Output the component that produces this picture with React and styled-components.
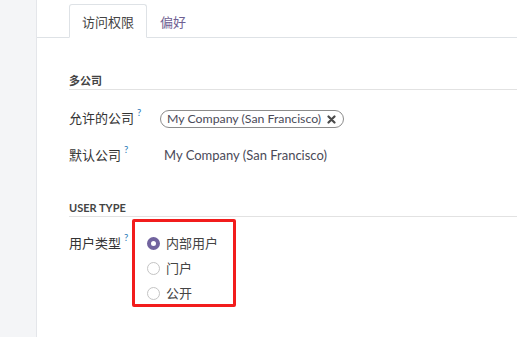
import styled, { createGlobalStyle } from 'styled-components'

const GlobalStyle = createGlobalStyle`
  html, body {
    margin: 0;
    padding: 0;
    background: #fff;
  }
  body {
    font-family: Lato, "Noto Sans CJK SC", sans-serif;
    font-size: 13px;
    color: #4c4c4c;
  }
`

const Page = styled.div`
  display: flex;
  width: 517px;
  height: 337px;
  overflow: hidden;
`

const Sidebar = styled.div`
  width: 36px;
  flex: none;
  background: #f4f5f7;
  border-right: 1px solid #e4e6ea;
`

const Sheet = styled.div`
  flex: 1;
  padding-top: 4px;
`

const TabBar = styled.div`
  display: flex;
  align-items: flex-end;
  padding-left: 32px;
  border-bottom: 1px solid #dee2e6;
  height: 33px;
`

const Tab = styled.div`
  height: 34px;
  box-sizing: border-box;
  padding: 0 12px;
  display: flex;
  align-items: center;
  font-size: 13px;
  margin-bottom: -1px;
  border: 1px solid ${p => (p.$active ? '#dee2e6' : 'transparent')};
  border-bottom-color: ${p => (p.$active ? '#fff' : 'transparent')};
  border-radius: 3px 3px 0 0;
  background: ${p => (p.$active ? '#fff' : 'transparent')};
  color: ${p => (p.$active ? '#444' : '#6f5f93')};
`

const Body = styled.div`
  padding-left: 32px;
`

const SectionTitle = styled.div`
  margin-top: ${p => p.$top}px;
  font-size: 11px;
  font-weight: 700;
  line-height: 16px;
  color: #444;
  border-bottom: 1px solid #e2e2e2;
`

const Row = styled.div`
  display: grid;
  grid-template-columns: 91px 1fr;
  align-items: start;
  margin-top: ${p => p.$top}px;
  line-height: 25px;
`

const Label = styled.div`
  color: #333;
  white-space: nowrap;
`

const Help = styled.sup`
  color: #2a7ab8;
  font-size: 9.5px;
  margin-left: 3px;
  vertical-align: 7px;
  line-height: 0;
`

const Tag = styled.span`
  display: inline-flex;
  align-items: center;
  gap: 6px;
  height: 18px;
  box-sizing: border-box;
  margin-top: 3px;
  padding: 0 7px 0 6px;
  border: 1px solid #8c8c8c;
  border-radius: 9px;
  color: #4a4a58;
  font-size: 12.3px;
  line-height: 16px;
  white-space: nowrap;
`

const Value = styled.div`
  padding-left: 4px;
  color: #4a4a58;
  white-space: nowrap;
`

const RadioList = styled.div`
  position: relative;
  margin-left: -13px;

  &::after {
    content: '';
    position: absolute;
    left: -15px;
    top: -12px;
    width: 104px;
    height: 88px;
    box-sizing: border-box;
    border: 3px solid #f21c1c;
    border-radius: 2px;
    pointer-events: none;
  }
`

const RadioRow = styled.div`
  display: flex;
  align-items: center;
  gap: 6px;
  height: 25px;
  color: #444;
`

const RadioDot = styled.span`
  width: 13px;
  height: 13px;
  box-sizing: border-box;
  border-radius: 50%;
  border: ${p => (p.$checked ? '4px solid #71639e' : '1px solid #c4c4c4')};
  background: #fff;
`

const Close = () => (
  <svg width="9" height="9" viewBox="0 0 9 9">
    <path d="M1.5 1.5 L7.5 7.5 M7.5 1.5 L1.5 7.5" stroke="#4a4a4a" strokeWidth="2.2" strokeLinecap="round" />
  </svg>
)

const userTypes = [
  { label: '内部用户', checked: true },
  { label: '门户', checked: false },
  { label: '公开', checked: false },
]

export default function App() {
  return (
    <>
      <GlobalStyle />
      <Page>
        <Sidebar />
        <Sheet>
          <TabBar>
            <Tab $active>访问权限</Tab>
            <Tab>偏好</Tab>
          </TabBar>
          <Body>
            <SectionTitle $top={35}>多公司</SectionTitle>
            <Row $top={16}>
              <Label>允许的公司<Help>?</Help></Label>
              <div>
                <Tag>My Company (San Francisco) <Close /></Tag>
              </div>
            </Row>
            <Row $top={12}>
              <Label>默认公司<Help>?</Help></Label>
              <Value>My Company (San Francisco)</Value>
            </Row>
            <SectionTitle $top={32}>USER TYPE</SectionTitle>
            <Row $top={14}>
              <Label>用户类型<Help>?</Help></Label>
              <RadioList>
                {userTypes.map(t => (
                  <RadioRow key={t.label}>
                    <RadioDot $checked={t.checked} />
                    {t.label}
                  </RadioRow>
                ))}
              </RadioList>
            </Row>
          </Body>
        </Sheet>
      </Page>
    </>
  )
}
